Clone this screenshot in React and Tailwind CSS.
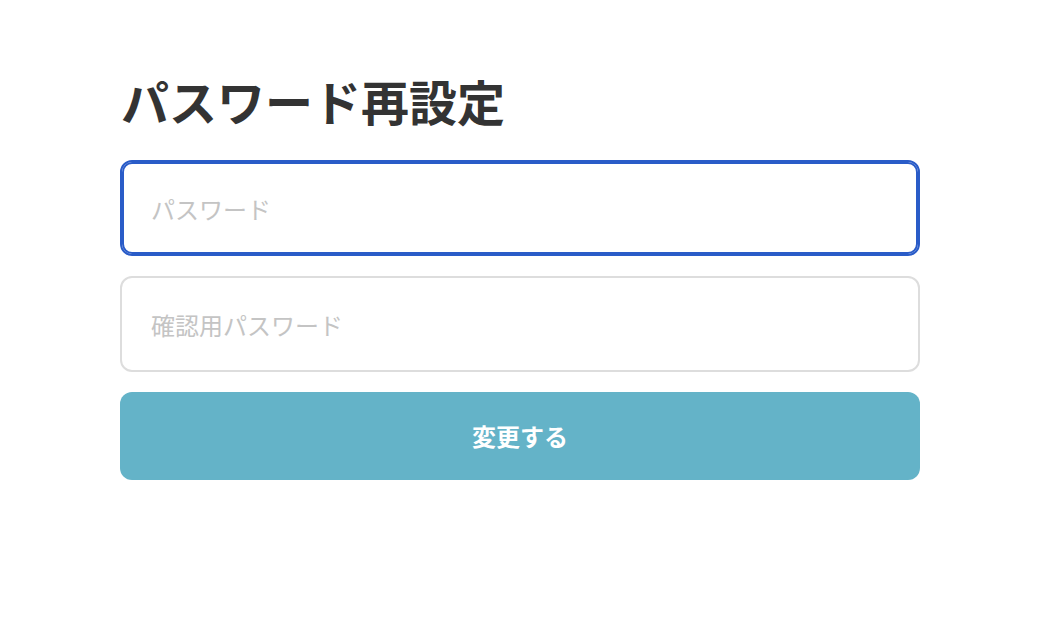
import React, { useState } from "react";

const font = { fontFamily: '"Noto Sans CJK JP", "Noto Sans", sans-serif' };

const App = () => {
  const [password, setPassword] = useState("");
  const [confirm, setConfirm] = useState("");

  return (
    <div className="min-h-screen bg-white" style={font}>
      <div className="w-[800px] ml-[120px] pt-[65px]">
        {/* title */}
        <h1 className="text-[48px] leading-[70px] font-bold text-[#333333] pl-[1px] mb-[25px]">
          パスワード再設定
        </h1>

        {/* form */}
        <div className="flex flex-col gap-[20px]">
          <input
            type="password"
            placeholder="パスワード"
            value={password}
            onChange={(e) => setPassword(e.target.value)}
            className="h-[96px] w-full rounded-[12px] border-2 border-[#2a5cc8] shadow-[inset_0_0_0_2px_#2a5cc8] px-[29px] text-[24px] text-[#333] placeholder:text-[#c4c4c4] outline-none"
          />
          <input
            type="password"
            placeholder="確認用パスワード"
            value={confirm}
            onChange={(e) => setConfirm(e.target.value)}
            className="h-[96px] w-full rounded-[12px] border-2 border-[#dddddd] px-[29px] text-[24px] text-[#333] placeholder:text-[#c4c4c4] outline-none"
          />
          <button className="h-[88px] w-full rounded-[12px] bg-[#64b3c8] text-white text-[24px] font-bold">
            変更する
          </button>
        </div>
      </div>
    </div>
  );
};

export default App;
